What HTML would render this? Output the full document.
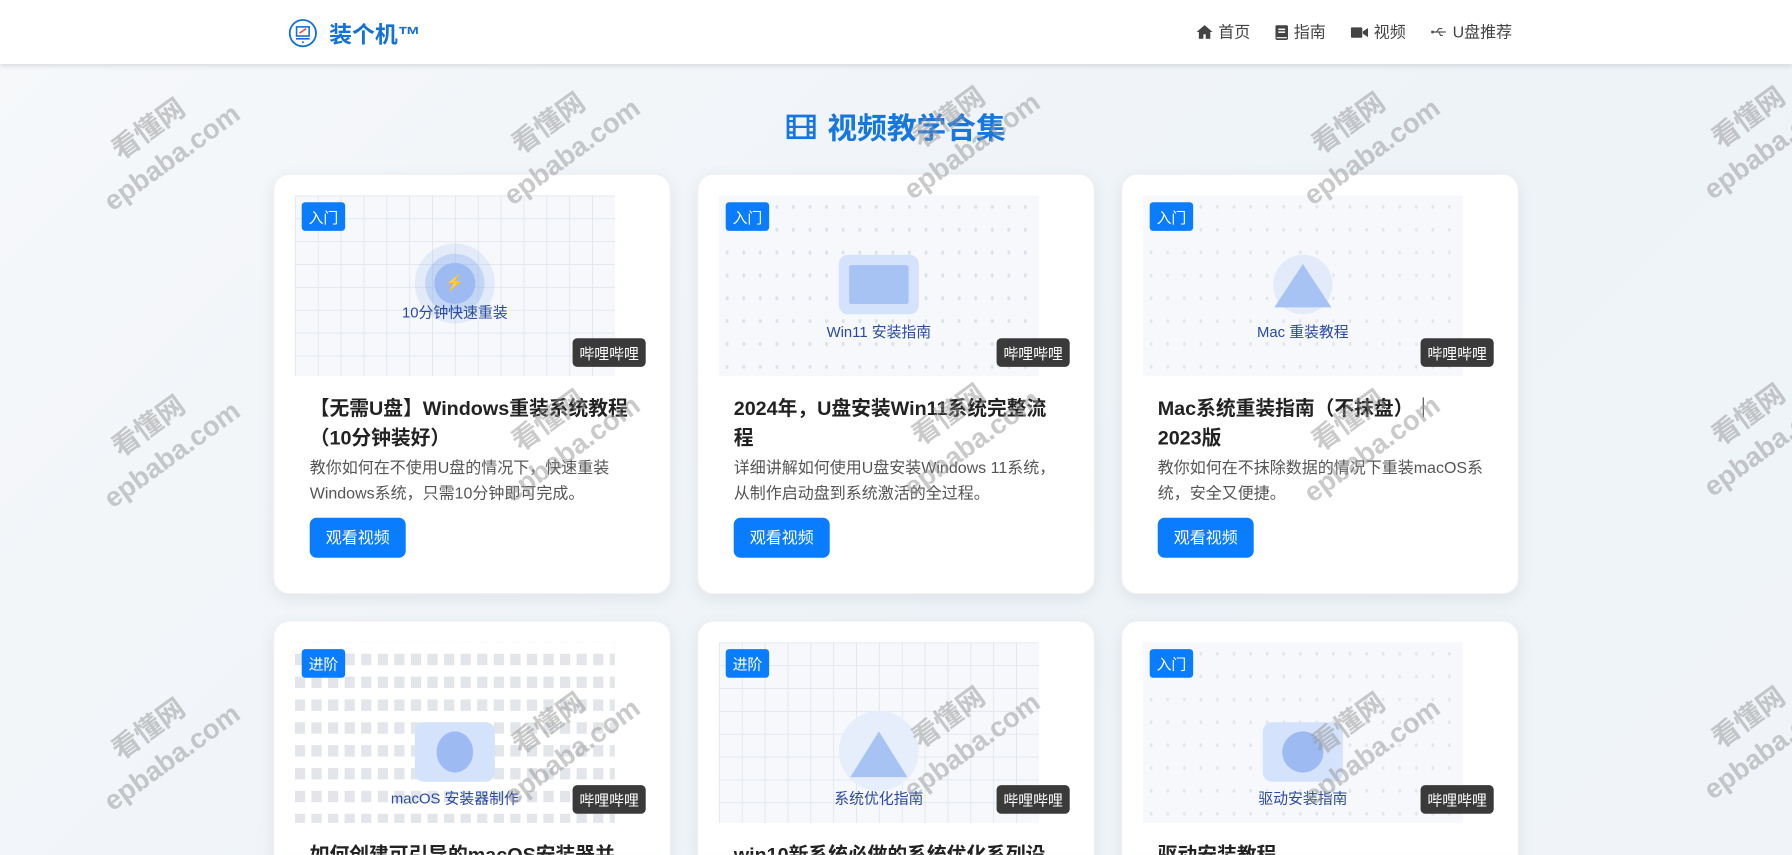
<!DOCTYPE html>
<html><head><meta charset="utf-8">
<style>
*{box-sizing:border-box;margin:0;padding:0}
html,body{width:1792px;height:855px;overflow:hidden}
body{font-family:"Liberation Sans","Noto Sans CJK SC",sans-serif;background:linear-gradient(135deg,#f6f8fa 0%,#eef3f8 60%,#f0f4f8 100%);position:relative}
.s{position:absolute;left:0;top:0;width:1568px;height:748px;transform:scale(1.142857);transform-origin:0 0;overflow:hidden}
.hdr{position:absolute;left:0;top:0;width:1568px;height:56px;background:#fff;box-shadow:0 2px 4px rgba(0,0,0,.1)}
.logo{position:absolute;left:252px;top:14px;display:flex;align-items:center;gap:10px;color:#1372d6;font-weight:bold;font-size:20px}
.nav{position:absolute;left:1047px;top:18px;display:flex;gap:22px;font-size:14px;color:#444}
.nav span{display:flex;align-items:center;gap:5px}
h1{position:absolute;left:0;width:1568px;top:92px;text-align:center;font-size:26px;color:#1677e0;font-weight:bold;display:flex;justify-content:center;align-items:center;gap:10px}
.card{position:absolute;width:348px;height:368px;background:#fff;border-radius:14px;box-shadow:0 4px 14px rgba(0,0,0,.07);border:1px solid #eef0f3}
.th{position:absolute;left:18px;top:18px;width:280px;height:158px;background-color:#f6f8fb;overflow:hidden}
.grid{background-image:linear-gradient(#e4e8ee 1px,transparent 1px),linear-gradient(90deg,#e4e8ee 1px,transparent 1px);background-size:20px 20px}
.dots{background-image:radial-gradient(#dde2ea 1.2px,transparent 1.5px);background-size:14.5px 20px}
.sqh{background-image:linear-gradient(#fff 10px,transparent 10px),linear-gradient(90deg,#e2e5ea 9px,transparent 9px);background-size:20px 20px,14.5px 20px;background-color:#fff}
.lvl{position:absolute;left:24px;top:24px;background:#0a7cff;color:#fff;font-size:13px;padding:3px 6px;border-radius:3px}
.bb{position:absolute;left:261px;top:143px;background:#3a3a3a;color:#fff;font-size:13px;padding:3px 6px;border-radius:4px}
.lab{position:absolute;left:0;width:280px;text-align:center;color:#2a4aa0;font-size:13px}
.t{position:absolute;left:31px;top:191px;width:310px;font-size:17.3px;font-weight:bold;color:#222;line-height:26px;white-space:nowrap}
.d{position:absolute;left:31px;top:245px;width:290px;font-size:14px;color:#555;line-height:22px}
.btn{position:absolute;left:31px;top:300px;width:84px;height:35px;background:#0a7cff;color:#fff;border-radius:6px;font-size:14px;text-align:center;line-height:35px}
.wm{position:absolute;color:rgba(150,150,150,.5);font-weight:bold;font-size:24px;transform:rotate(-36deg);transform-origin:left top;line-height:32px;pointer-events:none;z-index:10;white-space:nowrap}
.wm div:last-child{margin-left:-32px}
</style></head><body><div class="s">
<div class="hdr">
<div class="logo"><svg width="26" height="26" viewBox="0 0 26 26"><circle cx="13" cy="13" r="11.5" fill="none" stroke="#1372d6" stroke-width="1.6"/><rect x="7.5" y="7.5" width="11" height="8" fill="none" stroke="#1372d6" stroke-width="1.4"/><line x1="10" y1="13" x2="16" y2="9" stroke="#e04848" stroke-width="1.3"/><line x1="7" y1="18" x2="19" y2="18" stroke="#1372d6" stroke-width="1.4"/><circle cx="13" cy="21" r=".9" fill="#1372d6"/></svg>装个机™</div>
<div class="nav">
<span><svg width="14" height="12" viewBox="0 0 14 12"><path d="M7 0L0 6h2v6h4V8h2v4h4V6h2z" fill="#444"/></svg>首页</span>
<span><svg width="11" height="13" viewBox="0 0 11 13"><rect x="0" y="0" width="11" height="13" rx="1.5" fill="#444"/><rect x="2.5" y="3" width="6" height="1.3" fill="#fff"/><rect x="2.5" y="5.5" width="6" height="1.3" fill="#fff"/><rect x="1" y="10.5" width="9" height="1" fill="#fff"/></svg>指南</span>
<span><svg width="15" height="11" viewBox="0 0 15 11"><rect x="0" y="1" width="10" height="9" rx="1" fill="#444"/><path d="M10.5 4.5L15 1.5v8l-4.5-3z" fill="#444"/></svg>视频</span>
<span><svg width="14" height="10" viewBox="0 0 14 10"><line x1="1" y1="5" x2="13" y2="5" stroke="#555" stroke-width="1"/><circle cx="1.5" cy="5" r="1.3" fill="#555"/><path d="M5 5L7 2h3M7 5l1.5 3h2" stroke="#555" fill="none"/></svg>U盘推荐</span>
</div></div>
<h1><svg width="26" height="22" viewBox="0 0 26 22"><rect x="1.5" y="1.5" width="23" height="19" fill="none" stroke="#1677e0" stroke-width="2.4"/><line x1="7" y1="1" x2="7" y2="21" stroke="#1677e0" stroke-width="2.4"/><line x1="19" y1="1" x2="19" y2="21" stroke="#1677e0" stroke-width="2.4"/><line x1="1" y1="11" x2="25" y2="11" stroke="#1677e0" stroke-width="2"/><line x1="1" y1="6" x2="7" y2="6" stroke="#1677e0" stroke-width="2"/><line x1="1" y1="16" x2="7" y2="16" stroke="#1677e0" stroke-width="2"/><line x1="19" y1="6" x2="25" y2="6" stroke="#1677e0" stroke-width="2"/><line x1="19" y1="16" x2="25" y2="16" stroke="#1677e0" stroke-width="2"/></svg>视频教学合集</h1>

<div class="card" style="left:239px;top:152px">
<div class="th grid"><div style="position:absolute;left:105px;top:42px;width:70px;height:70px;border-radius:50%;background:rgba(120,160,240,.15)"></div><div style="position:absolute;left:114px;top:51px;width:52px;height:52px;border-radius:50%;background:rgba(100,150,240,.25)"></div><div style="position:absolute;left:122px;top:59px;width:36px;height:36px;border-radius:50%;background:#9dbaf3;text-align:center;line-height:34px;font-size:14px;color:#f0b400">⚡</div><div class="lab" style="top:92px">10分钟快速重装</div></div>
<div class="lvl">入门</div><div class="bb">哔哩哔哩</div>
<div class="t">【无需U盘】Windows重装系统教程<br>（10分钟装好）</div>
<div class="d">教你如何在不使用U盘的情况下，快速重装Windows系统，只需10分钟即可完成。</div>
<div class="btn">观看视频</div></div>

<div class="card" style="left:610px;top:152px">
<div class="th dots"><div style="position:absolute;left:105px;top:52px;width:70px;height:52px;border-radius:8px;background:#d4e2fb"></div><div style="position:absolute;left:114px;top:61px;width:52px;height:34px;border-radius:2px;background:#a6c3f3"></div><div class="lab" style="top:109px">Win11 安装指南</div></div>
<div class="lvl">入门</div><div class="bb">哔哩哔哩</div>
<div class="t">2024年，U盘安装Win11系统完整流<br>程</div>
<div class="d">详细讲解如何使用U盘安装Windows 11系统，从制作启动盘到系统激活的全过程。</div>
<div class="btn">观看视频</div></div>

<div class="card" style="left:981px;top:152px">
<div class="th dots" style="background-image:radial-gradient(#e2e6ec 1px,transparent 1.5px)"><div style="position:absolute;left:114px;top:52px;width:52px;height:52px;border-radius:50%;background:#e3ebfb"></div><div style="position:absolute;left:115px;top:60px;width:0;height:0;border-left:25px solid transparent;border-right:25px solid transparent;border-bottom:38px solid #a6c3f3"></div><div class="lab" style="top:109px">Mac 重装教程</div></div>
<div class="lvl">入门</div><div class="bb">哔哩哔哩</div>
<div class="t">Mac系统重装指南（不抹盘）｜<br>2023版</div>
<div class="d">教你如何在不抹除数据的情况下重装macOS系统，安全又便捷。</div>
<div class="btn">观看视频</div></div>

<div class="card" style="left:239px;top:543px">
<div class="th sqh"><div style="position:absolute;left:105px;top:70px;width:70px;height:52px;border-radius:8px;background:#d4e2fb"></div><div style="position:absolute;left:124px;top:78px;width:32px;height:36px;border-radius:50%;background:#9dbaf3"></div><div class="lab" style="top:126px">macOS 安装器制作</div></div>
<div class="lvl">进阶</div><div class="bb">哔哩哔哩</div>
<div class="t">如何创建可引导的macOS安装器并</div></div>

<div class="card" style="left:610px;top:543px">
<div class="th grid"><div style="position:absolute;left:105px;top:60px;width:70px;height:70px;border-radius:50%;background:#e6edfb"></div><div style="position:absolute;left:115px;top:78px;width:0;height:0;border-left:25px solid transparent;border-right:25px solid transparent;border-bottom:40px solid #a6c3f3"></div><div class="lab" style="top:126px">系统优化指南</div></div>
<div class="lvl">进阶</div><div class="bb">哔哩哔哩</div>
<div class="t">win10新系统必做的系统优化系列设</div></div>

<div class="card" style="left:981px;top:543px">
<div class="th dots" style="background-image:radial-gradient(#e2e6ec 1px,transparent 1.5px)"><div style="position:absolute;left:105px;top:70px;width:70px;height:52px;border-radius:8px;background:#d4e2fb"></div><div style="position:absolute;left:122px;top:78px;width:36px;height:36px;border-radius:50%;background:#9dbaf3"></div><div class="lab" style="top:126px">驱动安装指南</div></div>
<div class="lvl">入门</div><div class="bb">哔哩哔哩</div>
<div class="t">驱动安装教程</div></div>

<div class="wm" style="left:92px;top:122px"><div>看懂网</div><div>epbaba.com</div></div>
<div class="wm" style="left:442px;top:117px"><div>看懂网</div><div>epbaba.com</div></div>
<div class="wm" style="left:792px;top:112px"><div>看懂网</div><div>epbaba.com</div></div>
<div class="wm" style="left:1142px;top:117px"><div>看懂网</div><div>epbaba.com</div></div>
<div class="wm" style="left:1492px;top:112px"><div>看懂网</div><div>epbaba.com</div></div>
<div class="wm" style="left:92px;top:382px"><div>看懂网</div><div>epbaba.com</div></div>
<div class="wm" style="left:442px;top:377px"><div>看懂网</div><div>epbaba.com</div></div>
<div class="wm" style="left:792px;top:372px"><div>看懂网</div><div>epbaba.com</div></div>
<div class="wm" style="left:1142px;top:377px"><div>看懂网</div><div>epbaba.com</div></div>
<div class="wm" style="left:1492px;top:372px"><div>看懂网</div><div>epbaba.com</div></div>
<div class="wm" style="left:92px;top:647px"><div>看懂网</div><div>epbaba.com</div></div>
<div class="wm" style="left:442px;top:642px"><div>看懂网</div><div>epbaba.com</div></div>
<div class="wm" style="left:792px;top:637px"><div>看懂网</div><div>epbaba.com</div></div>
<div class="wm" style="left:1142px;top:642px"><div>看懂网</div><div>epbaba.com</div></div>
<div class="wm" style="left:1492px;top:637px"><div>看懂网</div><div>epbaba.com</div></div>
</div></body></html>
